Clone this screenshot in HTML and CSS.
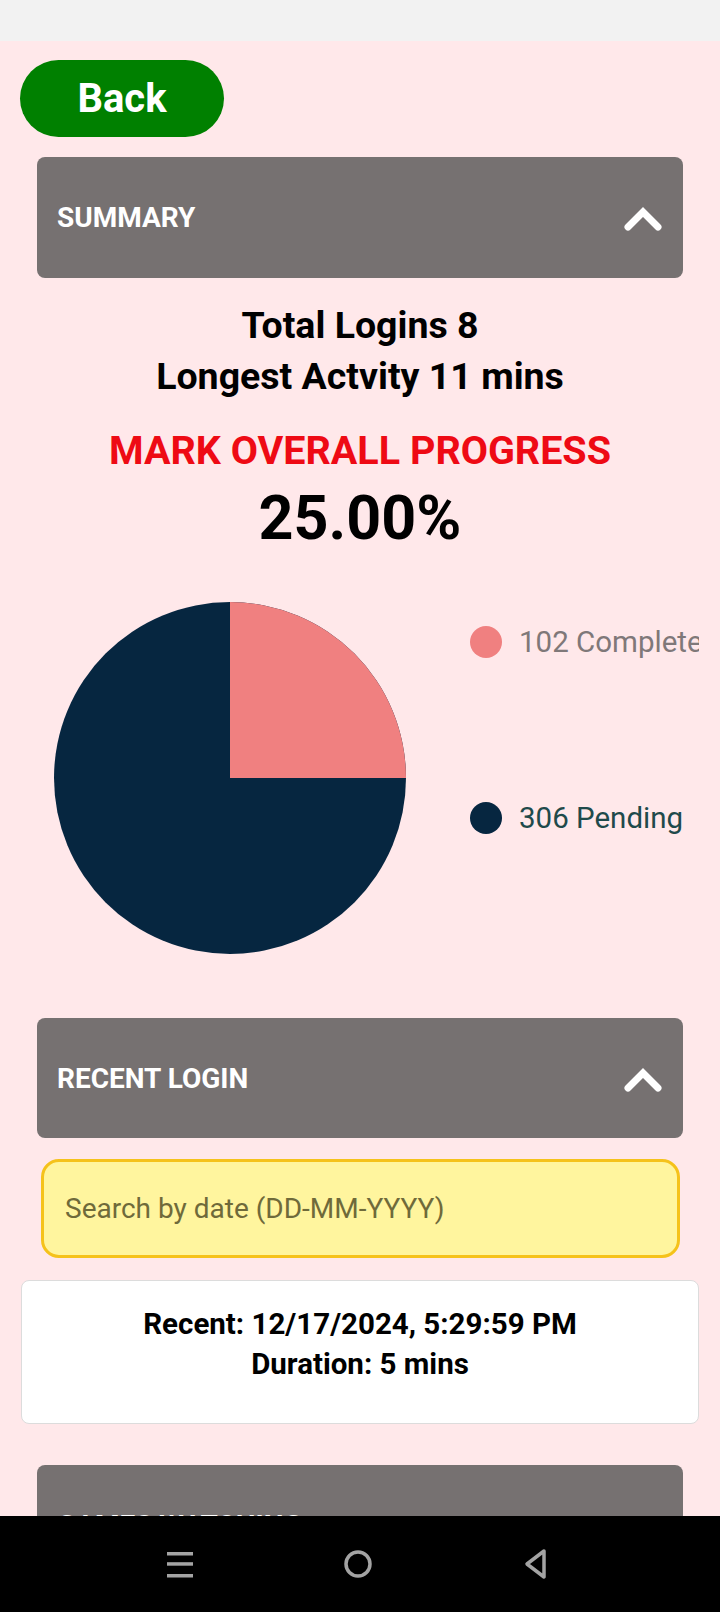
FILE: index.html
```html
<!DOCTYPE html>
<html lang="en">
<head>
<meta charset="utf-8">
<title>Progress</title>
<link rel="stylesheet" href="styles.css">
</head>
<body>
<div class="statusbar"></div>
<main class="page">
  <button class="back-btn">Back</button>

  <section class="accordion">
    <div class="acc-header">
      <span class="acc-title">SUMMARY</span>
      <svg class="chevron" width="40" height="28" viewBox="0 0 40 28"><polyline points="5,22 20,7 35,22" fill="none" stroke="#fff" stroke-width="7" stroke-linecap="round" stroke-linejoin="miter"/></svg>
    </div>
    <div class="summary">
      <div class="stats">
        <div>Total Logins 8</div>
        <div>Longest Actvity 11 mins</div>
      </div>
      <div class="progress-label">MARK OVERALL PROGRESS</div>
      <div class="progress-value">25.00%</div>
      <div class="chart">
        <svg class="pie" width="352" height="352" viewBox="0 0 352 352">
          <circle cx="176" cy="176" r="176" fill="#062640"/>
          <path d="M176 176 L176 0 A176 176 0 0 1 352 176 Z" fill="#f08080"/>
        </svg>
        <div class="legend">
          <div class="legend-item"><span class="dot dot-complete"></span><span class="legend-text complete">102 Complete</span></div>
          <div class="legend-item"><span class="dot dot-pending"></span><span class="legend-text pending">306 Pending</span></div>
        </div>
      </div>
    </div>
  </section>

  <section class="accordion recent">
    <div class="acc-header">
      <span class="acc-title">RECENT LOGIN</span>
      <svg class="chevron" width="40" height="28" viewBox="0 0 40 28"><polyline points="5,22 20,7 35,22" fill="none" stroke="#fff" stroke-width="7" stroke-linecap="round" stroke-linejoin="miter"/></svg>
    </div>
    <div class="search">
      <input class="search-input" type="text" placeholder="Search by date (DD-MM-YYYY)">
    </div>
    <div class="login-card">
      <div>Recent: 12/17/2024, 5:29:59 PM</div>
      <div>Duration: 5 mins</div>
    </div>
  </section>

  <section class="accordion games">
    <div class="acc-header">
      <span class="acc-title">GAMES WATCHING</span>
    </div>
  </section>
</main>

<nav class="navbar">
  <svg width="28" height="28" viewBox="0 0 28 28"><rect x="1" y="2" width="26" height="3.5" fill="#a3a3a3"/><rect x="1" y="12.2" width="26" height="3.5" fill="#a3a3a3"/><rect x="1" y="24" width="26" height="3.5" fill="#a3a3a3"/></svg>
  <svg width="30" height="30" viewBox="0 0 30 30"><circle cx="15" cy="15" r="12" fill="none" stroke="#a3a3a3" stroke-width="3.5"/></svg>
  <svg width="28" height="32" viewBox="0 0 28 32"><path d="M22 3 L5 16 L22 29 Z" fill="none" stroke="#a3a3a3" stroke-width="3.5" stroke-linejoin="round"/></svg>
</nav>
</body>
</html>
```
FILE: styles.css
```css
html, body {
  margin: 0;
  padding: 0;
  width: 720px;
  height: 1612px;
  overflow: hidden;
  background: #ffe8ea;
  font-family: Roboto, "Noto Sans", sans-serif;
}

.statusbar {
  height: 41px;
  background: #f2f2f2;
}

.page {
  display: flex;
  flex-direction: column;
}

.back-btn {
  margin: 19px 0 0 20px;
  width: 204px;
  height: 77px;
  border: none;
  border-radius: 39px;
  background: #008000;
  color: #fff;
  font-family: Roboto, sans-serif;
  font-weight: 700;
  font-size: 40px;
  padding: 0;
}

.acc-header {
  margin: 20px 37px 0 37px;
  height: 121px;
  border-radius: 8px;
  background: #767171;
  display: flex;
  align-items: center;
  justify-content: space-between;
  padding: 0 20px 0 20px;
  box-sizing: border-box;
}

.acc-title {
  color: #fff;
  font-weight: 700;
  font-size: 28px;
}

.chevron {
  display: block;
  margin-top: 3px;
}

.summary {
  display: flex;
  flex-direction: column;
  align-items: center;
}

.stats {
  margin-top: 22px;
  text-align: center;
  font-weight: 700;
  font-size: 37.5px;
  line-height: 51px;
  color: #000;
}

.progress-label {
  margin-top: 25px;
  color: #ee0a14;
  font-weight: 700;
  font-size: 39.5px;
}

.progress-value {
  margin-top: 8px;
  font-weight: 700;
  font-size: 61px;
  color: #000;
}

.chart {
  align-self: stretch;
  display: flex;
  margin-top: 48px;
}

.pie {
  display: block;
  margin-left: 54px;
  flex: none;
}

.legend {
  margin-left: 64px;
  width: 229px;
  overflow: hidden;
  display: flex;
  flex-direction: column;
  gap: 140px;
  padding-top: 22px;
}

.legend-item {
  display: flex;
  align-items: center;
  height: 36px;
  white-space: nowrap;
}

.dot {
  flex: none;
  width: 32px;
  height: 32px;
  border-radius: 50%;
  margin-right: 17px;
}

.dot-complete { background: #f08080; }
.dot-pending { background: #062640; }

.legend-text {
  font-size: 29.5px;
}

.complete { color: #7f7879; }
.pending { color: #1f4a4b; }

.recent .acc-header {
  margin-top: 64px;
  height: 120px;
}

.search {
  margin: 21px 40px 0 41px;
}

.search-input {
  display: block;
  width: 100%;
  height: 99px;
  box-sizing: border-box;
  border: 3px solid #f5c21b;
  border-radius: 18px;
  background: #fff59e;
  padding: 0 0 0 21px;
  font-family: Roboto, sans-serif;
  font-size: 28px;
  outline: none;
}

.search-input::placeholder {
  color: #6f6a3a;
}

.login-card {
  margin: 22px 21px 0 21px;
  background: #fff;
  border: 1.5px solid #dcdcdc;
  border-radius: 8px;
  padding: 23px 0 39px;
  text-align: center;
  font-weight: 700;
  font-size: 29.5px;
  line-height: 40px;
  color: #000;
}

.games .acc-header {
  margin-top: 41px;
  height: 120px;
}

.navbar {
  position: fixed;
  left: 0;
  bottom: 0;
  width: 720px;
  height: 96px;
  background: #000;
  display: flex;
  align-items: center;
  justify-content: space-between;
  padding: 0 170px 0 166px;
  box-sizing: border-box;
}
```
